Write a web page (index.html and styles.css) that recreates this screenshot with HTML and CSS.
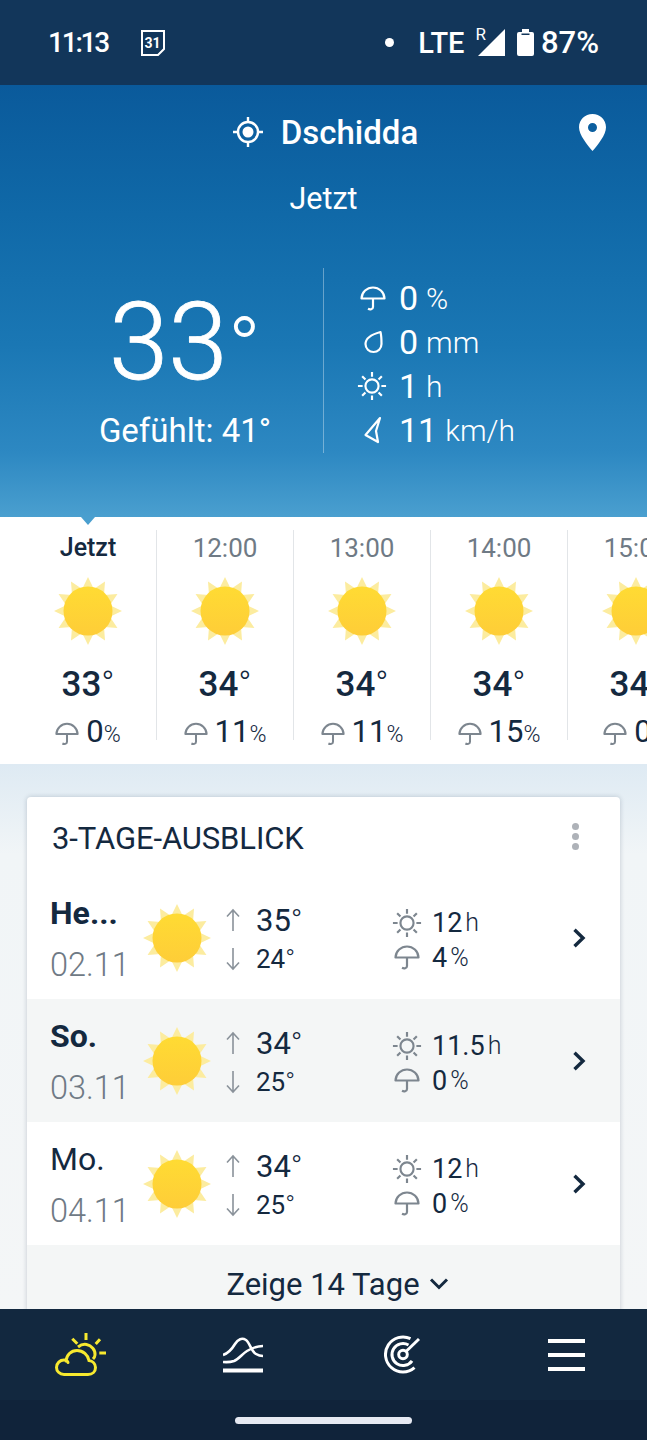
FILE: index.html
```html
<!DOCTYPE html>
<html lang="de">
<head>
    <meta charset="UTF-8">
    <title>Wetter Dschidda</title>
    <link rel="stylesheet" href="styles.css">
</head>
<body>
<svg class="defs" width="0" height="0">
    <defs>
        <linearGradient id="sunfill" x1="0" y1="0" x2="0" y2="1">
            <stop offset="0" stop-color="#ffdb33"/>
            <stop offset="1" stop-color="#fecd38"/>
        </linearGradient>
    </defs>
    <symbol id="sun" viewBox="-35 -35 70 70">
        <polygon fill="#fcec9f" transform="scale(1.03)" points="33,0 21.25,5.69 28.6,16.5 15.56,15.56 16.5,28.6 5.69,21.25 0,33 -5.69,21.25 -16.5,28.6 -15.56,15.56 -28.6,16.5 -21.25,5.69 -33,0 -21.25,-5.69 -28.6,-16.5 -15.56,-15.56 -16.5,-28.6 -5.69,-21.25 0,-33 5.69,-21.25 16.5,-28.6 15.56,-15.56 28.6,-16.5 21.25,-5.69"/>
        <circle r="24.5" fill="url(#sunfill)"/>
    </symbol>
    <symbol id="umbrella" viewBox="0 0 26 25">
        <path d="M1.500 12.500C1.800 6 7 1.500 13 1.500s11.200 4.500 11.500 11z" fill="none" stroke="currentColor" stroke-width="2.200" stroke-linejoin="round"/>
        <path d="M13 12.500v8.500c0 2.500-3 2.800-5 1.800" fill="none" stroke="currentColor" stroke-width="2.200"/>
    </symbol>
    <symbol id="sunline" viewBox="0 0 32 32">
        <circle cx="16" cy="16" r="7" fill="none" stroke="currentColor" stroke-width="2.300"/>
        <path d="M16 1v5M16 26v5M1 16h5M26 16h5M5.500 5.500l3.500 3.500M26.500 5.500l-3.500 3.500M5.500 26.500l3.500-3.500M26.500 26.500l-3.500-3.500" stroke="currentColor" stroke-width="2.300" fill="none"/>
    </symbol>
    <symbol id="drop" viewBox="0 0 20 24">
        <path d="M17.500 2C18.500 6 18.500 10 18.500 14a8 8 0 0 1-16 0C2.500 8 10 4 17.500 2z" fill="none" stroke="currentColor" stroke-width="2.200" stroke-linejoin="round"/>
    </symbol>
    <symbol id="wind" viewBox="0 0 20 28">
        <path d="M17 2L2.500 19 15 26 13 15z" fill="none" stroke="currentColor" stroke-width="2.200" stroke-linejoin="round"/>
    </symbol>
    <symbol id="chevron" viewBox="0 0 14 20">
        <path d="M2.500 1.800l8.500 8.200-8.500 8.200" fill="none" stroke="currentColor" stroke-width="3.400"/>
    </symbol>
    <symbol id="arrowup" viewBox="0 0 16 24">
        <path d="M8 23V2M2 8.500L8 2l6 6.500" fill="none" stroke="currentColor" stroke-width="1.600"/>
    </symbol>
</svg>

<div id="wrapper">
    <div class="statusbar">
        <span class="clock">11:13</span>
        <svg class="cal" viewBox="0 0 26 28">
            <path d="M2 2h22v18l-6 6H2z" fill="none" stroke="#fff" stroke-width="2"/>
            <text x="12.500" y="19" text-anchor="middle" class="caltext">31</text>
        </svg>
        <span class="dot"></span>
        <span class="lte">LTE</span>
        <span class="roam">R</span>
        <svg class="signal" viewBox="0 0 27 27"><polygon points="27,0 27,27 0,27" fill="#fff"/></svg>
        <svg class="battery" viewBox="0 0 17 27">
            <path d="M5 0h7v3h3a2 2 0 0 1 2 2v20a2 2 0 0 1-2 2H2a2 2 0 0 1-2-2V5a2 2 0 0 1 2-2h3z" fill="#fff"/>
            <rect x="4.500" y="4.500" width="8" height="1.500" fill="#12365a"/>
        </svg>
        <span class="percent">87%</span>
    </div>

    <div class="hero">
        <div class="location">
            <div class="place">
                <svg class="target" viewBox="0 0 30 30">
                    <circle cx="15" cy="15" r="10" fill="none" stroke="#fff" stroke-width="2.400"/>
                    <circle cx="15" cy="15" r="5.500" fill="#fff"/>
                    <path d="M15 0v5M15 25v5M0 15h5M25 15h5" stroke="#fff" stroke-width="2.400"/>
                </svg>
                <span class="city">Dschidda</span>
            </div>
            <svg class="pin" viewBox="0 0 27 37">
                <path fill-rule="evenodd" d="M13.500 0C6 0 0 5.800 0 13.200 0 21 8.500 31 13.500 37 18.500 31 27 21 27 13.200 27 5.800 21 0 13.500 0zm0 9a4.500 4.500 0 1 1 0 9 4.500 4.500 0 0 1 0-9z" fill="#fff"/>
            </svg>
        </div>
        <div class="now">Jetzt</div>
        <div class="current">
            <div class="temp">
                <div class="bigtemp">33<span class="bigdeg">°</span></div>
                <div class="feels">Gefühlt: 41°</div>
            </div>
            <div class="facts">
                <div class="fact"><span class="facticon"><svg class="ic-umbrella"><use href="#umbrella"/></svg></span><b>0</b><i>%</i></div>
                <div class="fact"><span class="facticon"><svg class="ic-drop"><use href="#drop"/></svg></span><b>0</b><i>mm</i></div>
                <div class="fact"><span class="facticon"><svg class="ic-sun"><use href="#sunline"/></svg></span><b>1</b><i>h</i></div>
                <div class="fact"><span class="facticon"><svg class="ic-wind"><use href="#wind"/></svg></span><b>11</b><i>km/h</i></div>
            </div>
        </div>
    </div>

    <div class="hours">
        <div class="hour active">
            <div class="time">Jetzt</div>
            <svg class="sunicon"><use href="#sun"/></svg>
            <div class="deg">33<span class="thin">°</span></div>
            <div class="rain"><svg class="rainicon"><use href="#umbrella"/></svg><b>0</b><i>%</i></div>
        </div>
        <div class="hour">
            <div class="time">12:00</div>
            <svg class="sunicon"><use href="#sun"/></svg>
            <div class="deg">34<span class="thin">°</span></div>
            <div class="rain"><svg class="rainicon"><use href="#umbrella"/></svg><b>11</b><i>%</i></div>
        </div>
        <div class="hour">
            <div class="time">13:00</div>
            <svg class="sunicon"><use href="#sun"/></svg>
            <div class="deg">34<span class="thin">°</span></div>
            <div class="rain"><svg class="rainicon"><use href="#umbrella"/></svg><b>11</b><i>%</i></div>
        </div>
        <div class="hour">
            <div class="time">14:00</div>
            <svg class="sunicon"><use href="#sun"/></svg>
            <div class="deg">34<span class="thin">°</span></div>
            <div class="rain"><svg class="rainicon"><use href="#umbrella"/></svg><b>15</b><i>%</i></div>
        </div>
        <div class="hour">
            <div class="time">15:00</div>
            <svg class="sunicon"><use href="#sun"/></svg>
            <div class="deg">34<span class="thin">°</span></div>
            <div class="rain"><svg class="rainicon"><use href="#umbrella"/></svg><b>0</b><i>%</i></div>
        </div>
    </div>

    <div class="content">
        <div class="card">
            <div class="cardhead">
                <span class="cardtitle">3-TAGE-AUSBLICK</span>
                <span class="more"><span></span><span></span><span></span></span>
            </div>
            <div class="day">
                <div class="date"><div class="name bold">He...</div><div class="num">02.11</div></div>
                <svg class="sunicon"><use href="#sun"/></svg>
                <div class="minmax">
                    <div class="line"><svg class="arrow"><use href="#arrowup"/></svg><span class="high">35<span class="thin">°</span></span></div>
                    <div class="line"><svg class="arrow down"><use href="#arrowup"/></svg><span class="low">24<span class="thin">°</span></span></div>
                </div>
                <div class="stats">
                    <div class="line"><svg class="staticon"><use href="#sunline"/></svg><b>12</b><i>h</i></div>
                    <div class="line"><svg class="staticon small"><use href="#umbrella"/></svg><b>4</b><i>%</i></div>
                </div>
                <svg class="go"><use href="#chevron"/></svg>
            </div>
            <div class="day shaded">
                <div class="date"><div class="name bold">So.</div><div class="num">03.11</div></div>
                <svg class="sunicon"><use href="#sun"/></svg>
                <div class="minmax">
                    <div class="line"><svg class="arrow"><use href="#arrowup"/></svg><span class="high">34<span class="thin">°</span></span></div>
                    <div class="line"><svg class="arrow down"><use href="#arrowup"/></svg><span class="low">25<span class="thin">°</span></span></div>
                </div>
                <div class="stats">
                    <div class="line"><svg class="staticon"><use href="#sunline"/></svg><b>11.5</b><i>h</i></div>
                    <div class="line"><svg class="staticon small"><use href="#umbrella"/></svg><b>0</b><i>%</i></div>
                </div>
                <svg class="go"><use href="#chevron"/></svg>
            </div>
            <div class="day">
                <div class="date"><div class="name">Mo.</div><div class="num">04.11</div></div>
                <svg class="sunicon"><use href="#sun"/></svg>
                <div class="minmax">
                    <div class="line"><svg class="arrow"><use href="#arrowup"/></svg><span class="high">34<span class="thin">°</span></span></div>
                    <div class="line"><svg class="arrow down"><use href="#arrowup"/></svg><span class="low">25<span class="thin">°</span></span></div>
                </div>
                <div class="stats">
                    <div class="line"><svg class="staticon"><use href="#sunline"/></svg><b>12</b><i>h</i></div>
                    <div class="line"><svg class="staticon small"><use href="#umbrella"/></svg><b>0</b><i>%</i></div>
                </div>
                <svg class="go"><use href="#chevron"/></svg>
            </div>
            <div class="showmore">
                <span>Zeige 14 Tage</span>
                <svg class="expand" viewBox="0 0 20 14"><path d="M2 2.500l8 8 8-8" fill="none" stroke="currentColor" stroke-width="3"/></svg>
            </div>
        </div>
    </div>

    <div class="navbar">
        <div class="tabs">
            <svg class="tab weather" viewBox="0 0 51 43">
                <path d="M13 29.500C12.500 28 11 27 9 27c-4 0-7.500 3-7.500 7.500 0 3.500 3 7 7.500 7h24c4.500 0 7.500-3 7.500-7 0-4-3-6.500-6.500-7-1-5.500-6-10-12-10s-10.500 4.500-11 10.500" fill="none" stroke="#f7e92f" stroke-width="3" stroke-linecap="round"/>
                <path d="M23 14c2.500-2 5.500-3 8.500-2.500 5 .8 9 5.500 8.500 10.500-.1 1.500-1 3-2 4" fill="none" stroke="#f7e92f" stroke-width="3"/>
                <path d="M31 0v7M17.300 5.700l5 5M45 6.300l-4.300 4.700M44.300 20H51" stroke="#f7e92f" stroke-width="3" fill="none"/>
            </svg>
            <svg class="tab waves" viewBox="0 0 40 36">
                <path d="M0 18c6-2 9-6 12-11 3-5 7-6.500 11-4 4 3 5 11 10 14 2 1.200 4 2 7 2" fill="none" stroke="#fff" stroke-width="2.600"/>
                <path d="M0 25c5 .5 8 0 11-1 5-2 8-7 13-10 5-3 10-5 16-5" fill="none" stroke="#fff" stroke-width="2.600"/>
                <path d="M0 33.500h40" stroke="#fff" stroke-width="4" fill="none"/>
            </svg>
            <svg class="tab radar" viewBox="0 0 36 40">
                <path d="M26.500 3.700A17.500 17.500 0 1 0 30.500 32.700" fill="none" stroke="#fff" stroke-width="3"/>
                <path d="M24.500 10A11 11 0 1 0 28 25.800" fill="none" stroke="#fff" stroke-width="3"/>
                <circle cx="19" cy="19.500" r="4.300" fill="none" stroke="#fff" stroke-width="3"/>
                <path d="M22 16.500L35 4" stroke="#fff" stroke-width="3"/>
            </svg>
            <div class="tab burger"><span></span><span></span><span></span></div>
        </div>
        <div class="gesture"><span class="handle"></span></div>
    </div>
</div>
</body>
</html>
```

FILE: styles.css
```css
html, body {
    margin: 0;
    padding: 0;
}
body {
    font-family: Roboto, "Liberation Sans", sans-serif;
    color: #14293f;
}
.defs {
    display: block;
    height: 0;
}
#wrapper {
    width: 647px;
    height: 1440px;
    overflow: hidden;
    display: flex;
    flex-direction: column;
}
b, i {
    font-style: normal;
    font-weight: 400;
}
.thin {
    font-weight: 300;
}

/* status bar */
.statusbar {
    height: 85px;
    flex: none;
    box-sizing: border-box;
    padding: 0 48px 0 48px;
    background-color: #12365a;
    color: #fff;
    display: flex;
    align-items: center;
    font-size: 29px;
    font-weight: 500;
}
.clock {
    font-size: 28px;
    letter-spacing: -2.200px;
}
.cal {
    width: 26px;
    height: 28px;
    margin-left: 32px;
}
.caltext {
    font-size: 14px;
    font-weight: 700;
    fill: #fff;
}
.dot {
    width: 9px;
    height: 9px;
    border-radius: 50%;
    background-color: #fff;
    margin-left: auto;
}
.lte {
    margin-left: 24px;
}
.roam {
    font-size: 17px;
    font-weight: 400;
    margin: -18px 0 0 11px;
}
.signal {
    width: 27px;
    height: 27px;
    margin-left: -8px;
}
.battery {
    width: 17px;
    height: 27px;
    margin-left: 12px;
}
.percent {
    font-size: 31px;
    margin-left: 7px;
}

/* current weather */
.hero {
    height: 432px;
    flex: none;
    box-sizing: border-box;
    background: linear-gradient(#0a5a9b 0%, #1069a8 30%, #1a77b4 60%, #2d88c2 85%, #4a9fcf 100%);
    color: #fff;
    padding-top: 27px;
}
.location {
    display: grid;
    grid-template-columns: 1fr auto 1fr;
    align-items: center;
    height: 40px;
}
.place {
    grid-column: 2;
    display: flex;
    align-items: center;
    gap: 18px;
    padding-left: 4px;
}
.target {
    width: 30px;
    height: 30px;
}
.city {
    font-size: 33px;
    font-weight: 500;
}
.pin {
    width: 27px;
    height: 37px;
    justify-self: end;
    margin-right: 41px;
}
.now {
    text-align: center;
    font-size: 30.500px;
    margin-top: 27px;
    line-height: 40px;
}
.current {
    display: flex;
    margin-top: 49px;
    height: 185px;
}
.temp {
    width: 324px;
    box-sizing: border-box;
    padding-left: 47px;
    text-align: center;
    border-right: 1px solid rgba(255, 255, 255, 0.35);
}
.bigtemp {
    font-size: 107px;
    font-weight: 300;
    -webkit-text-stroke: 0.8px #fff;
    line-height: 120px;
    margin-top: 15px;
}
.bigdeg {
    font-size: 88px;
    line-height: 0;
    -webkit-text-stroke: 0;
}
.feels {
    font-size: 33px;
    font-weight: 400;
    line-height: 40px;
    margin-top: 8px;
}
.facts {
    padding: 8px 0 0 33px;
}
.fact {
    display: flex;
    align-items: center;
    height: 44px;
}
.fact b {
    font-size: 34px;
    margin-left: 12px;
}
.fact i {
    font-size: 30px;
    font-weight: 300;
    margin-left: 8px;
}
.facticon {
    width: 30px;
    display: flex;
    justify-content: center;
}
.ic-umbrella {
    width: 26px;
    height: 25px;
    margin-left: 2px;
}
.ic-drop {
    width: 20px;
    height: 24px;
    margin-left: 2px;
}
.ic-sun {
    width: 32px;
    height: 32px;
}
.ic-wind {
    width: 20px;
    height: 28px;
    margin-left: 2px;
}

/* hourly strip */
.hours {
    height: 247px;
    flex: none;
    box-sizing: border-box;
    background-color: #fff;
    display: flex;
    padding: 13px 0 0 20px;
    position: relative;
}
.hours::before {
    content: "";
    position: absolute;
    left: 81px;
    top: 0;
    border-left: 7px solid transparent;
    border-right: 7px solid transparent;
    border-top: 8px solid #4a9fcf;
}
.hour {
    width: 137px;
    height: 210px;
    flex: none;
    box-sizing: border-box;
    padding-top: 1px;
    border-right: 1px solid #e2e5e8;
    display: flex;
    flex-direction: column;
    align-items: center;
    white-space: nowrap;
}
.time {
    font-size: 26px;
    line-height: 34px;
    color: #6f7a85;
}
.active .time {
    font-size: 25px;
    font-weight: 500;
    color: #14293f;
}
.sunicon {
    width: 70px;
    height: 70px;
    flex: none;
}
.hour .sunicon {
    margin-top: 11px;
}
.deg {
    font-size: 35px;
    font-weight: 500;
    line-height: 44px;
    margin-top: 17px;
}
.rain {
    display: flex;
    align-items: baseline;
    margin-top: 6px;
    font-size: 31px;
    line-height: 38px;
}
.rainicon {
    width: 24px;
    height: 24px;
    color: #7d868f;
    margin-right: 7px;
    align-self: center;
}
.rain i {
    font-size: 23px;
    font-weight: 300;
}

/* outlook card */
.content {
    flex: 1;
    min-height: 0;
    overflow: hidden;
    background: linear-gradient(#deeaf3 0, #f1f5f7 90px, #f4f6f7 100%);
    padding: 33px 27px 0 27px;
}
.card {
    background-color: #fff;
    border-radius: 4px 4px 0 0;
    box-shadow: 0 0 5px rgba(20, 40, 70, 0.22);
}
.cardhead {
    height: 79px;
    box-sizing: border-box;
    padding: 0 41px 0 26px;
    display: flex;
    align-items: center;
    justify-content: space-between;
}
.cardtitle {
    font-size: 31px;
    letter-spacing: -0.100px;
    margin: 3px 0 0 -1px;
}
.more {
    display: flex;
    flex-direction: column;
    gap: 3px;
}
.more span {
    width: 7px;
    height: 7px;
    border-radius: 50%;
    background-color: #aeb2b8;
}
.day {
    height: 123px;
    display: grid;
    grid-template-columns: 94px 66px 184px 1fr auto;
    align-items: center;
    padding: 0 34px 0 23px;
}
.day .sunicon {
    margin-left: -2px;
}
.shaded {
    background-color: #f4f6f6;
}
.date {
    padding-top: 3px;
}
.name {
    font-size: 32px;
    line-height: 42px;
}
.bold {
    font-weight: 700;
}
.num {
    font-size: 32.500px;
    font-weight: 300;
    color: #6f7a85;
    line-height: 44px;
    margin-top: 9px;
}
.minmax {
    padding: 4px 0 0 15px;
}
.line {
    display: flex;
    align-items: center;
    height: 39px;
}
.arrow {
    width: 16px;
    height: 24px;
    color: #8a929a;
    margin-right: 15px;
}
.down {
    transform: scaleY(-1);
}
.high {
    font-size: 31px;
}
.low {
    font-size: 26px;
}
.stats {
    padding-top: 5px;
}
.stats .line {
    height: 35px;
}
.staticon {
    width: 30px;
    height: 30px;
    color: #7d868f;
    margin: 0 10px 0 -2px;
}
.small {
    width: 26px;
    height: 25px;
    margin: 0 12px 0 0;
}
.stats b {
    font-size: 27px;
}
.stats i {
    font-size: 25px;
    font-weight: 300;
    margin-left: 3px;
}
.go {
    width: 14px;
    height: 20px;
    color: #14293f;
}
.showmore {
    height: 78px;
    box-sizing: border-box;
    padding-left: 28px;
    background-color: #f4f6f6;
    display: flex;
    align-items: center;
    justify-content: center;
    gap: 9px;
    font-size: 31px;
}
.expand {
    width: 20px;
    height: 14px;
}

/* bottom navigation */
.navbar {
    height: 131px;
    flex: none;
    background-color: #12283f;
}
.tabs {
    height: 91px;
    display: grid;
    grid-template-columns: repeat(4, 1fr);
    align-items: center;
    justify-items: center;
}
.weather {
    width: 51px;
    height: 43px;
}
.waves {
    width: 40px;
    height: 36px;
}
.radar {
    width: 36px;
    height: 40px;
    margin-right: 5px;
}
.burger {
    width: 37px;
    display: flex;
    flex-direction: column;
    gap: 10px;
}
.burger span {
    height: 4px;
    background-color: #fff;
}
.gesture {
    height: 40px;
    background-color: #10233a;
    display: flex;
    justify-content: center;
    padding-top: 17px;
    box-sizing: border-box;
}
.handle {
    width: 177px;
    height: 7px;
    border-radius: 4px;
    background-color: #e6e9f2;
}
```
